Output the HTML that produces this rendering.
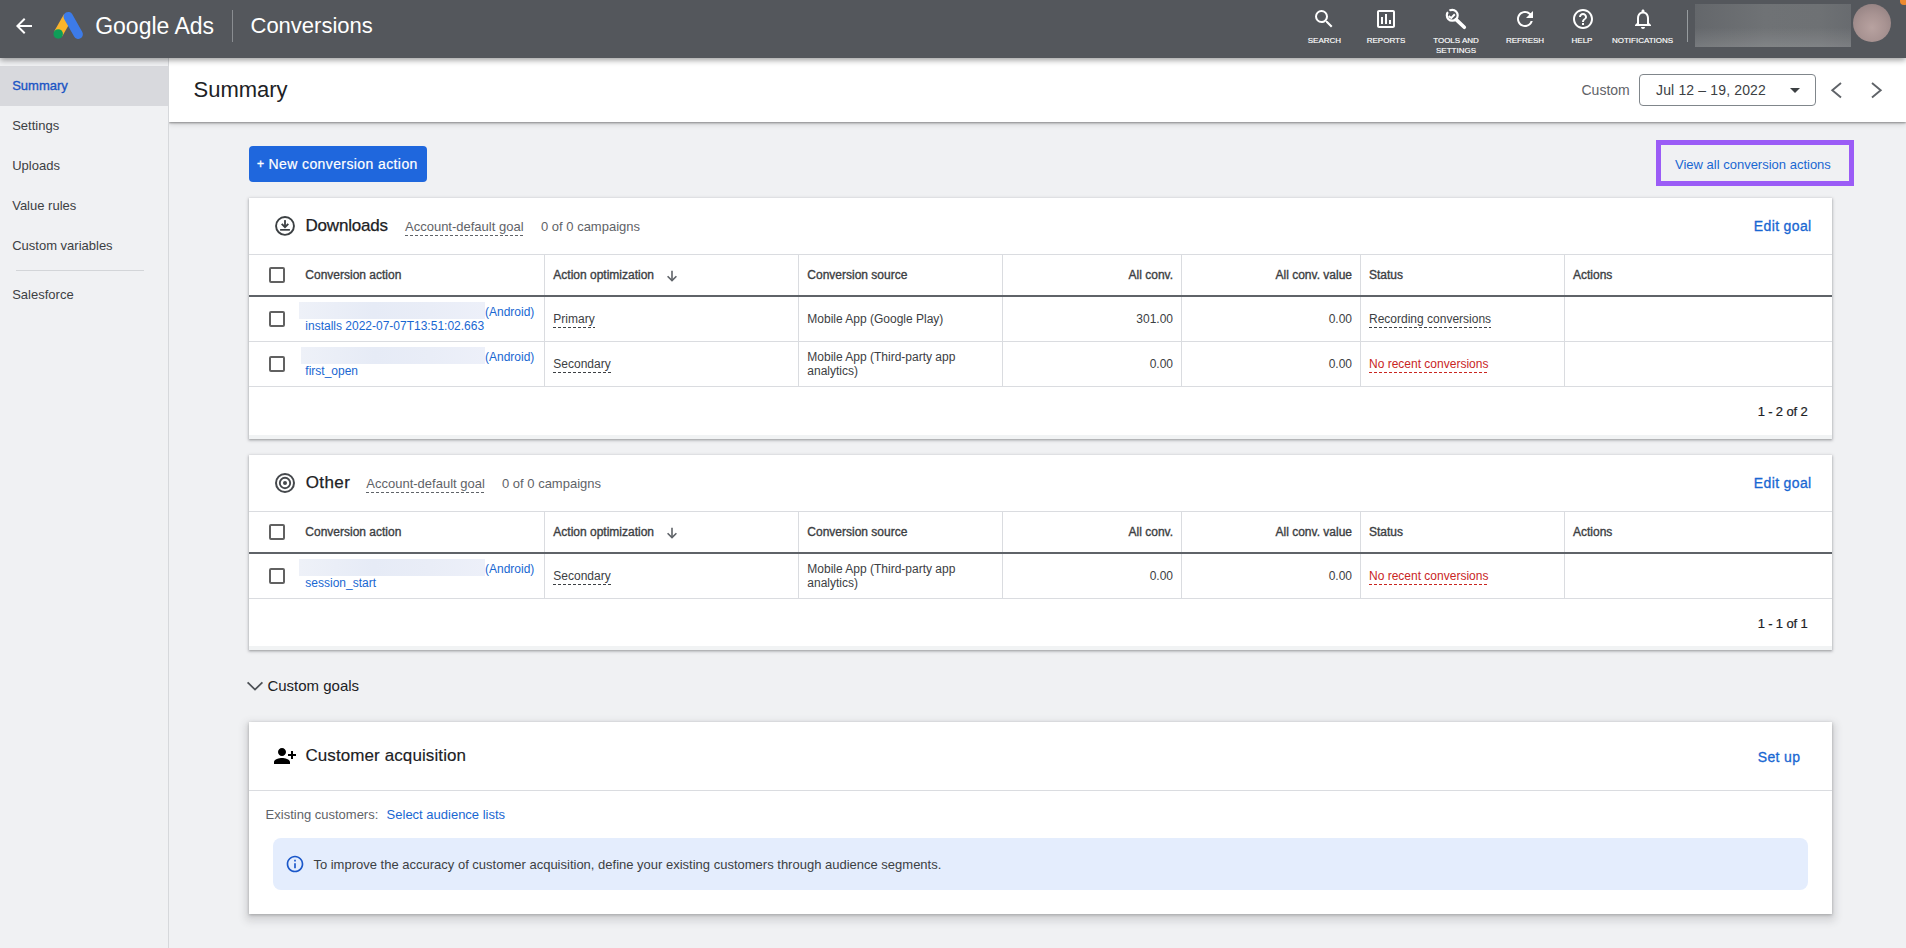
<!DOCTYPE html>
<html><head><meta charset="utf-8"><title>Conversions - Google Ads</title>
<style>
html,body{margin:0;padding:0;}
body{width:1906px;height:948px;overflow:hidden;position:relative;background:#f0f1f3;font-family:"Liberation Sans", sans-serif;}
.t{position:absolute;white-space:nowrap;line-height:1;}
.ul{position:absolute;left:0;right:0;height:1px;}
</style></head><body>
<div style="position:absolute;left:0px;top:0px;width:1906px;height:57.6px;background:#54575c;z-index:5;box-shadow:0 2px 6px rgba(0,0,0,.4);"></div>
<div style="position:absolute;left:0px;top:57px;width:168px;height:891px;background:#f0f1f3;"></div>
<div style="position:absolute;left:168px;top:57px;width:1px;height:891px;background:#d6d8db;"></div>
<div style="position:absolute;left:169px;top:57px;width:1737px;height:65px;background:#fff;box-shadow:0 1px 2px rgba(0,0,0,.38),0 2px 6px rgba(0,0,0,.14);clip-path:inset(0 0 -12px 0);z-index:2;"></div>
<svg style="position:absolute;left:12px;top:14px;z-index:6" width="24" height="24" viewBox="0 0 24 24"><path fill="#fff" d="M20 11H7.83l5.59-5.59L12 4l-8 8 8 8 1.41-1.41L7.83 13H20v-2z"/></svg>
<svg style="position:absolute;left:48px;top:8px;z-index:6" width="40" height="36" viewBox="48 8 40 36"><line x1="68" y1="16.6" x2="58.2" y2="33.9" stroke="#fbb42c" stroke-width="9.4" stroke-linecap="butt"/><line x1="68.2" y1="16.6" x2="78.2" y2="34.2" stroke="#3d7be8" stroke-width="9.4" stroke-linecap="round"/><circle cx="58.2" cy="33.9" r="4.75" fill="#0f9d58"/></svg>
<div class="t" style="top:15.00px;font-size:23px;color:#fff;left:95.2px;z-index:6;">Google Ads</div>
<div style="position:absolute;left:232px;top:10px;width:1px;height:32px;background:#8a8d91;z-index:6;"></div>
<div class="t" style="top:15.00px;font-size:22px;color:#fff;left:250.5px;z-index:6;">Conversions</div>
<svg style="position:absolute;left:1312.00px;top:7.00px;z-index:6" width="24" height="24" viewBox="0 0 24 24"><path fill="#fff" d="M15.5 14h-.79l-.28-.27A6.471 6.471 0 0 0 16 9.5 6.5 6.5 0 1 0 9.5 16c1.61 0 3.09-.59 4.23-1.57l.27.28v.79l5 4.99L20.49 19l-4.99-5zm-6 0C7.01 14 5 11.99 5 9.5S7.01 5 9.5 5 14 7.01 14 9.5 11.99 14 9.5 14z"/></svg>
<svg style="position:absolute;left:1374.00px;top:7.00px;z-index:6" width="24" height="24" viewBox="0 0 24 24"><path fill="#fff" d="M19 3H5c-1.1 0-2 .9-2 2v14c0 1.1.9 2 2 2h14c1.1 0 2-.9 2-2V5c0-1.1-.9-2-2-2zm0 16H5V5h14v14zM7 10h2v7H7zm4-3h2v10h-2zm4 6h2v4h-2z"/></svg>
<svg style="position:absolute;left:1440px;top:5px;z-index:6" width="32" height="27" viewBox="1440 5 32 27"><circle cx="1452.25" cy="15.26" r="5.45" fill="none" stroke="#fff" stroke-width="2.2"/><polyline points="1448.6,16.2 1451.3,18 1454.8,14.3" fill="none" stroke="#fff" stroke-width="2"/><line x1="1446.8" y1="9.4" x2="1451.2" y2="13.8" stroke="#54575c" stroke-width="2.1"/><line x1="1456.2" y1="19.6" x2="1464.3" y2="27.3" stroke="#fff" stroke-width="3.6" stroke-linecap="round"/></svg>
<svg style="position:absolute;left:1513.00px;top:7.00px;z-index:6" width="24" height="24" viewBox="0 0 24 24"><path fill="#fff" d="M17.65 6.35A7.958 7.958 0 0 0 12 4c-4.42 0-7.99 3.58-7.99 8s3.57 8 7.99 8c3.73 0 6.84-2.55 7.73-6h-2.08A5.99 5.99 0 0 1 12 18c-3.31 0-6-2.69-6-6s2.69-6 6-6c1.66 0 3.14.69 4.22 1.78L13 11h7V4l-2.35 2.35z"/></svg>
<svg style="position:absolute;left:1570.80px;top:7.00px;z-index:6" width="24" height="24" viewBox="0 0 24 24"><path fill="#fff" d="M11 18h2v-2h-2v2zm1-16C6.48 2 2 6.48 2 12s4.48 10 10 10 10-4.48 10-10S17.52 2 12 2zm0 18c-4.41 0-8-3.59-8-8s3.59-8 8-8 8 3.59 8 8-3.59 8-8 8zm0-14c-2.21 0-4 1.79-4 4h2c0-1.1.9-2 2-2s2 .9 2 2c0 2-3 1.75-3 5h2c0-2.25 3-2.5 3-5 0-2.21-1.79-4-4-4z"/></svg>
<svg style="position:absolute;left:1630.50px;top:7.00px;z-index:6" width="24" height="24" viewBox="0 0 24 24"><path fill="#fff" d="M12 22c1.1 0 2-.9 2-2h-4c0 1.1.9 2 2 2zm6-6v-5c0-3.07-1.63-5.64-4.5-6.32V4c0-.83-.67-1.5-1.5-1.5s-1.5.67-1.5 1.5v.68C7.64 5.36 6 7.92 6 11v5l-2 2v1h16v-1l-2-2zm-2 1H8v-6c0-2.48 1.51-4.5 4-4.5s4 2.02 4 4.5v6z"/></svg>
<div class="t" style="left:1264.4px;width:120px;text-align:center;top:37px;font-size:8px;color:#fff;letter-spacing:0px;-webkit-text-stroke:0.15px #fff;z-index:6">SEARCH</div>
<div class="t" style="left:1326px;width:120px;text-align:center;top:37px;font-size:8px;color:#fff;letter-spacing:0px;-webkit-text-stroke:0.15px #fff;z-index:6">REPORTS</div>
<div class="t" style="left:1396px;width:120px;text-align:center;top:37px;font-size:8px;color:#fff;letter-spacing:0px;-webkit-text-stroke:0.15px #fff;z-index:6">TOOLS AND</div>
<div class="t" style="left:1396px;width:120px;text-align:center;top:47px;font-size:8px;color:#fff;letter-spacing:0px;-webkit-text-stroke:0.15px #fff;z-index:6">SETTINGS</div>
<div class="t" style="left:1465px;width:120px;text-align:center;top:37px;font-size:8px;color:#fff;letter-spacing:0px;-webkit-text-stroke:0.15px #fff;z-index:6">REFRESH</div>
<div class="t" style="left:1522px;width:120px;text-align:center;top:37px;font-size:8px;color:#fff;letter-spacing:0px;-webkit-text-stroke:0.15px #fff;z-index:6">HELP</div>
<div class="t" style="left:1582.5px;width:120px;text-align:center;top:37px;font-size:8px;color:#fff;letter-spacing:0px;-webkit-text-stroke:0.15px #fff;z-index:6">NOTIFICATIONS</div>
<div style="position:absolute;left:1687px;top:10px;width:1px;height:32px;background:#979c9f;z-index:6;"></div>
<div style="position:absolute;left:1695px;top:4px;width:156px;height:43px;background:linear-gradient(180deg,rgba(255,255,255,0) 55%,rgba(255,255,255,.13) 100%),linear-gradient(90deg,#64676b 0%,#6f7275 45%,#6e7174 80%,#686b6f 100%);z-index:6;"></div>
<div style="position:absolute;left:1853px;top:4px;width:38px;height:38px;border-radius:50%;background:radial-gradient(circle at 50% 62%,#b8a2a0 0%,#a89392 45%,#8c7b7c 100%);z-index:6"></div>
<div style="position:absolute;left:1900px;top:-3px;width:8px;height:8px;border-radius:50%;background:#ee8a2f;z-index:6"></div>
<div style="position:absolute;left:0px;top:66px;width:168px;height:40px;background:#d8d9dd;"></div>
<div class="t" style="top:79.00px;font-size:13px;color:#1b55c4;left:12.2px;-webkit-text-stroke:0.35px currentColor;">Summary</div>
<div class="t" style="top:119.00px;font-size:13px;color:#3c4043;left:12.2px;">Settings</div>
<div class="t" style="top:159.00px;font-size:13px;color:#3c4043;left:12.2px;">Uploads</div>
<div class="t" style="top:199.00px;font-size:13px;color:#3c4043;left:12.2px;">Value rules</div>
<div class="t" style="top:239.00px;font-size:13px;color:#3c4043;left:12.2px;">Custom variables</div>
<div style="position:absolute;left:16px;top:270px;width:128px;height:1px;background:#d3d5d8;"></div>
<div class="t" style="top:288.00px;font-size:13px;color:#3c4043;left:12.2px;">Salesforce</div>
<div class="t" style="top:79.00px;font-size:22px;color:#202124;left:193.5px;z-index:3;">Summary</div>
<div class="t" style="top:83.00px;font-size:14px;color:#5f6368;left:1581.5px;z-index:3;">Custom</div>
<div style="position:absolute;left:1639px;top:74px;width:175px;height:30px;border:1px solid #80868b;border-radius:4px;z-index:3;"></div>
<div class="t" style="top:83.00px;font-size:14px;color:#3c4043;letter-spacing:0.15px;left:1656px;z-index:3;">Jul 12 – 19, 2022</div>
<svg style="position:absolute;left:1783px;top:78px;z-index:3" width="24" height="24" viewBox="0 0 24 24"><path fill="#3c4043" d="M7 10l5 5 5-5z"/></svg>
<svg style="position:absolute;left:1826px;top:78px;z-index:3" width="20" height="24" viewBox="1826 78 20 24"><polyline points="1841,83 1832.3,90.2 1841,97.4" fill="none" stroke="#5f6368" stroke-width="1.9"/></svg>
<svg style="position:absolute;left:1866px;top:78px;z-index:3" width="20" height="24" viewBox="1866 78 20 24"><polyline points="1872,83 1880.7,90.2 1872,97.4" fill="none" stroke="#5f6368" stroke-width="1.9"/></svg>
<div style="position:absolute;left:249px;top:146px;width:178px;height:36px;background:#1f67dd;border-radius:4px;"></div>
<div class="t" style="top:158.00px;font-size:12px;color:#fff;left:257px;-webkit-text-stroke:0.35px currentColor;">+</div>
<div class="t" style="top:157.00px;font-size:14px;color:#fff;letter-spacing:0.4px;left:268.5px;-webkit-text-stroke:0.2px currentColor;">New conversion action</div>
<div style="position:absolute;left:1656px;top:140px;width:188px;height:36px;border:5px solid #9b5cf6;"></div>
<div class="t" style="top:158.20px;font-size:13px;color:#1967d2;left:1675px;">View all conversion actions</div>
<div style="position:absolute;left:249px;top:198px;width:1583px;height:241px;background:#fff;box-shadow:0 1px 2px rgba(60,64,67,.35),0 1px 3px 1px rgba(60,64,67,.16);"></div>
<div style="position:absolute;left:249px;top:435px;width:1583px;height:4px;background:#f1f3f4;"></div>
<svg style="position:absolute;left:270px;top:210px" width="30" height="30" viewBox="0 0 30 30"><circle cx="15" cy="15.9" r="8.95" fill="none" stroke="#3c4043" stroke-width="1.9"/><rect x="14.1" y="10.1" width="1.8" height="6.3" fill="#3c4043"/><polyline points="11.7,13.8 15,17.1 18.3,13.8" fill="none" stroke="#3c4043" stroke-width="1.9"/><rect x="10.1" y="19" width="9.8" height="1.7" fill="#3c4043"/></svg>
<div class="t" style="top:217.00px;font-size:17px;color:#202124;letter-spacing:-0.2px;left:305.5px;-webkit-text-stroke:0.25px currentColor;">Downloads</div>
<div class="t" style="top:220.00px;font-size:13px;color:#5f6368;left:405px;">Account-default goal<i class="ul" style="top:15px;background:repeating-linear-gradient(90deg,#5f6368 0 3px,transparent 3px 5px)"></i></div>
<div class="t" style="top:219.90px;font-size:13px;color:#5f6368;left:541px;">0 of 0 campaigns</div>
<div class="t" style="top:218.70px;font-size:14px;color:#1967d2;letter-spacing:0.35px;right:94.5px;-webkit-text-stroke:0.3px currentColor;">Edit goal</div>
<div style="position:absolute;left:249px;top:254px;width:1583px;height:1px;background:#dadce0;"></div>
<div style="position:absolute;left:249px;top:295px;width:1583px;height:2px;background:#5f6368;"></div>
<div style="position:absolute;left:544px;top:255px;width:1px;height:40px;background:#dadce0;"></div>
<div style="position:absolute;left:798px;top:255px;width:1px;height:40px;background:#dadce0;"></div>
<div style="position:absolute;left:1002px;top:255px;width:1px;height:40px;background:#dadce0;"></div>
<div style="position:absolute;left:1181px;top:255px;width:1px;height:40px;background:#dadce0;"></div>
<div style="position:absolute;left:1360px;top:255px;width:1px;height:40px;background:#dadce0;"></div>
<div style="position:absolute;left:1564px;top:255px;width:1px;height:40px;background:#dadce0;"></div>
<div style="position:absolute;left:269px;top:267px;width:12px;height:12px;border:2px solid #616161;border-radius:2px"></div>
<div class="t" style="top:268.70px;font-size:12px;color:#3c4043;left:305.3px;-webkit-text-stroke:0.35px currentColor;">Conversion action</div>
<div class="t" style="top:268.70px;font-size:12px;color:#3c4043;left:553.3px;-webkit-text-stroke:0.35px currentColor;">Action optimization</div>
<svg style="position:absolute;left:660px;top:266px" width="24" height="20" viewBox="660 266 24 20"><line x1="672" y1="270.8" x2="672" y2="280.5" stroke="#5f6368" stroke-width="1.6"/><polyline points="667.6,276.2 672,280.6 676.4,276.2" fill="none" stroke="#5f6368" stroke-width="1.6"/></svg>
<div class="t" style="top:268.70px;font-size:12px;color:#3c4043;left:807.3px;-webkit-text-stroke:0.35px currentColor;">Conversion source</div>
<div class="t" style="top:268.70px;font-size:12px;color:#3c4043;right:733px;-webkit-text-stroke:0.35px currentColor;">All conv.</div>
<div class="t" style="top:268.70px;font-size:12px;color:#3c4043;right:554px;-webkit-text-stroke:0.35px currentColor;">All conv. value</div>
<div class="t" style="top:268.70px;font-size:12px;color:#3c4043;left:1369px;-webkit-text-stroke:0.35px currentColor;">Status</div>
<div class="t" style="top:268.70px;font-size:12px;color:#3c4043;left:1573px;-webkit-text-stroke:0.35px currentColor;">Actions</div>
<div style="position:absolute;left:249px;top:341px;width:1583px;height:1px;background:#dadce0;"></div>
<div style="position:absolute;left:544px;top:297px;width:1px;height:44px;background:#dadce0;"></div>
<div style="position:absolute;left:798px;top:297px;width:1px;height:44px;background:#dadce0;"></div>
<div style="position:absolute;left:1002px;top:297px;width:1px;height:44px;background:#dadce0;"></div>
<div style="position:absolute;left:1181px;top:297px;width:1px;height:44px;background:#dadce0;"></div>
<div style="position:absolute;left:1360px;top:297px;width:1px;height:44px;background:#dadce0;"></div>
<div style="position:absolute;left:1564px;top:297px;width:1px;height:44px;background:#dadce0;"></div>
<div style="position:absolute;left:269px;top:311px;width:12px;height:12px;border:2px solid #616161;border-radius:2px"></div>
<div style="position:absolute;left:299px;top:302px;width:186px;height:17px;background:linear-gradient(90deg,#eef1f8,#e6ebf6 40%,#e9edf7 70%,#edf0f9);"></div>
<div class="t" style="top:306.00px;font-size:12px;color:#1967d2;left:485px;">(Android)</div>
<div class="t" style="top:319.60px;font-size:12px;color:#1967d2;left:305.3px;">installs 2022-07-07T13:51:02.663</div>
<div class="t" style="top:313.00px;font-size:12px;color:#3c4043;left:553.3px;">Primary<i class="ul" style="top:14px;background:repeating-linear-gradient(90deg,#3c4043 0 3px,transparent 3px 5px)"></i></div>
<div class="t" style="top:313.00px;font-size:12px;color:#3c4043;left:807.3px;">Mobile App (Google Play)</div>
<div class="t" style="top:313.00px;font-size:12px;color:#3c4043;right:733px;">301.00</div>
<div class="t" style="top:313.00px;font-size:12px;color:#3c4043;right:554px;">0.00</div>
<div class="t" style="top:313.00px;font-size:12px;color:#3c4043;left:1369px;">Recording conversions<i class="ul" style="top:14px;background:repeating-linear-gradient(90deg,#3c4043 0 3px,transparent 3px 5px)"></i></div>
<div style="position:absolute;left:249px;top:386px;width:1583px;height:1px;background:#dadce0;"></div>
<div style="position:absolute;left:544px;top:342px;width:1px;height:44px;background:#dadce0;"></div>
<div style="position:absolute;left:798px;top:342px;width:1px;height:44px;background:#dadce0;"></div>
<div style="position:absolute;left:1002px;top:342px;width:1px;height:44px;background:#dadce0;"></div>
<div style="position:absolute;left:1181px;top:342px;width:1px;height:44px;background:#dadce0;"></div>
<div style="position:absolute;left:1360px;top:342px;width:1px;height:44px;background:#dadce0;"></div>
<div style="position:absolute;left:1564px;top:342px;width:1px;height:44px;background:#dadce0;"></div>
<div style="position:absolute;left:269px;top:356px;width:12px;height:12px;border:2px solid #616161;border-radius:2px"></div>
<div style="position:absolute;left:301px;top:347px;width:184px;height:17px;background:linear-gradient(90deg,#eef1f8,#e6ebf6 40%,#e9edf7 70%,#edf0f9);"></div>
<div class="t" style="top:351.00px;font-size:12px;color:#1967d2;left:485px;">(Android)</div>
<div class="t" style="top:364.60px;font-size:12px;color:#1967d2;left:305.3px;">first_open</div>
<div class="t" style="top:358.00px;font-size:12px;color:#3c4043;left:553.3px;">Secondary<i class="ul" style="top:14px;background:repeating-linear-gradient(90deg,#3c4043 0 3px,transparent 3px 5px)"></i></div>
<div class="t" style="top:351.00px;font-size:12px;color:#3c4043;left:807.3px;">Mobile App (Third-party app</div>
<div class="t" style="top:365.00px;font-size:12px;color:#3c4043;left:807.3px;">analytics)</div>
<div class="t" style="top:358.00px;font-size:12px;color:#3c4043;right:733px;">0.00</div>
<div class="t" style="top:358.00px;font-size:12px;color:#3c4043;right:554px;">0.00</div>
<div class="t" style="top:358.00px;font-size:12px;color:#c9251f;left:1369px;">No recent conversions<i class="ul" style="top:14px;background:repeating-linear-gradient(90deg,#c9251f 0 3px,transparent 3px 5px)"></i></div>
<div class="t" style="top:405.00px;font-size:13px;color:#202124;letter-spacing:-0.15px;right:98.5px;-webkit-text-stroke:0.2px currentColor;">1 - 2 of 2</div>
<div style="position:absolute;left:249px;top:455px;width:1583px;height:195px;background:#fff;box-shadow:0 1px 2px rgba(60,64,67,.35),0 1px 3px 1px rgba(60,64,67,.16);"></div>
<div style="position:absolute;left:249px;top:646px;width:1583px;height:4px;background:#f1f3f4;"></div>
<svg style="position:absolute;left:273px;top:471px" width="24" height="24" viewBox="0 0 24 24"><circle cx="12" cy="12" r="9" fill="none" stroke="#45484c" stroke-width="2"/><circle cx="12" cy="12" r="5.2" fill="none" stroke="#45484c" stroke-width="1.9"/><circle cx="12" cy="12" r="2" fill="#45484c"/></svg>
<div class="t" style="top:474.00px;font-size:17px;color:#202124;letter-spacing:0.4px;left:305.7px;-webkit-text-stroke:0.25px currentColor;">Other</div>
<div class="t" style="top:477.00px;font-size:13px;color:#5f6368;left:366.3px;">Account-default goal<i class="ul" style="top:15px;background:repeating-linear-gradient(90deg,#5f6368 0 3px,transparent 3px 5px)"></i></div>
<div class="t" style="top:476.90px;font-size:13px;color:#5f6368;left:502px;">0 of 0 campaigns</div>
<div class="t" style="top:475.70px;font-size:14px;color:#1967d2;letter-spacing:0.35px;right:94.5px;-webkit-text-stroke:0.3px currentColor;">Edit goal</div>
<div style="position:absolute;left:249px;top:511px;width:1583px;height:1px;background:#dadce0;"></div>
<div style="position:absolute;left:249px;top:552px;width:1583px;height:2px;background:#5f6368;"></div>
<div style="position:absolute;left:544px;top:512px;width:1px;height:40px;background:#dadce0;"></div>
<div style="position:absolute;left:798px;top:512px;width:1px;height:40px;background:#dadce0;"></div>
<div style="position:absolute;left:1002px;top:512px;width:1px;height:40px;background:#dadce0;"></div>
<div style="position:absolute;left:1181px;top:512px;width:1px;height:40px;background:#dadce0;"></div>
<div style="position:absolute;left:1360px;top:512px;width:1px;height:40px;background:#dadce0;"></div>
<div style="position:absolute;left:1564px;top:512px;width:1px;height:40px;background:#dadce0;"></div>
<div style="position:absolute;left:269px;top:524px;width:12px;height:12px;border:2px solid #616161;border-radius:2px"></div>
<div class="t" style="top:525.70px;font-size:12px;color:#3c4043;left:305.3px;-webkit-text-stroke:0.35px currentColor;">Conversion action</div>
<div class="t" style="top:525.70px;font-size:12px;color:#3c4043;left:553.3px;-webkit-text-stroke:0.35px currentColor;">Action optimization</div>
<svg style="position:absolute;left:660px;top:523px" width="24" height="20" viewBox="660 523 24 20"><line x1="672" y1="527.8" x2="672" y2="537.5" stroke="#5f6368" stroke-width="1.6"/><polyline points="667.6,533.2 672,537.6 676.4,533.2" fill="none" stroke="#5f6368" stroke-width="1.6"/></svg>
<div class="t" style="top:525.70px;font-size:12px;color:#3c4043;left:807.3px;-webkit-text-stroke:0.35px currentColor;">Conversion source</div>
<div class="t" style="top:525.70px;font-size:12px;color:#3c4043;right:733px;-webkit-text-stroke:0.35px currentColor;">All conv.</div>
<div class="t" style="top:525.70px;font-size:12px;color:#3c4043;right:554px;-webkit-text-stroke:0.35px currentColor;">All conv. value</div>
<div class="t" style="top:525.70px;font-size:12px;color:#3c4043;left:1369px;-webkit-text-stroke:0.35px currentColor;">Status</div>
<div class="t" style="top:525.70px;font-size:12px;color:#3c4043;left:1573px;-webkit-text-stroke:0.35px currentColor;">Actions</div>
<div style="position:absolute;left:249px;top:598px;width:1583px;height:1px;background:#dadce0;"></div>
<div style="position:absolute;left:544px;top:554px;width:1px;height:44px;background:#dadce0;"></div>
<div style="position:absolute;left:798px;top:554px;width:1px;height:44px;background:#dadce0;"></div>
<div style="position:absolute;left:1002px;top:554px;width:1px;height:44px;background:#dadce0;"></div>
<div style="position:absolute;left:1181px;top:554px;width:1px;height:44px;background:#dadce0;"></div>
<div style="position:absolute;left:1360px;top:554px;width:1px;height:44px;background:#dadce0;"></div>
<div style="position:absolute;left:1564px;top:554px;width:1px;height:44px;background:#dadce0;"></div>
<div style="position:absolute;left:269px;top:568px;width:12px;height:12px;border:2px solid #616161;border-radius:2px"></div>
<div style="position:absolute;left:299px;top:559px;width:186px;height:17px;background:linear-gradient(90deg,#eef1f8,#e6ebf6 40%,#e9edf7 70%,#edf0f9);"></div>
<div class="t" style="top:563.00px;font-size:12px;color:#1967d2;left:485px;">(Android)</div>
<div class="t" style="top:576.60px;font-size:12px;color:#1967d2;left:305.3px;">session_start</div>
<div class="t" style="top:570.00px;font-size:12px;color:#3c4043;left:553.3px;">Secondary<i class="ul" style="top:14px;background:repeating-linear-gradient(90deg,#3c4043 0 3px,transparent 3px 5px)"></i></div>
<div class="t" style="top:563.00px;font-size:12px;color:#3c4043;left:807.3px;">Mobile App (Third-party app</div>
<div class="t" style="top:577.00px;font-size:12px;color:#3c4043;left:807.3px;">analytics)</div>
<div class="t" style="top:570.00px;font-size:12px;color:#3c4043;right:733px;">0.00</div>
<div class="t" style="top:570.00px;font-size:12px;color:#3c4043;right:554px;">0.00</div>
<div class="t" style="top:570.00px;font-size:12px;color:#c9251f;left:1369px;">No recent conversions<i class="ul" style="top:14px;background:repeating-linear-gradient(90deg,#c9251f 0 3px,transparent 3px 5px)"></i></div>
<div class="t" style="top:617.00px;font-size:13px;color:#202124;letter-spacing:-0.15px;right:98.5px;-webkit-text-stroke:0.2px currentColor;">1 - 1 of 1</div>
<svg style="position:absolute;left:240px;top:672px" width="30" height="28" viewBox="240 672 30 28"><polyline points="247.6,682.4 255,689.6 262.4,682.4" fill="none" stroke="#4d5156" stroke-width="1.8"/></svg>
<div class="t" style="top:677.80px;font-size:15px;color:#202124;left:267.4px;">Custom goals</div>
<div style="position:absolute;left:249px;top:722px;width:1583px;height:192px;background:#fff;box-shadow:0 1px 3px rgba(60,64,67,.35),0 4px 8px 3px rgba(60,64,67,.16);"></div>
<div style="position:absolute;left:249px;top:790px;width:1583px;height:1px;background:#dadce0;"></div>
<svg style="position:absolute;left:273px;top:744px" width="24" height="24" viewBox="0 0 24 24"><path fill="#000" d="M15 12c2.21 0 4-1.79 4-4s-1.79-4-4-4-4 1.79-4 4 1.79 4 4 4zm-9-2V7H4v3H1v2h3v3h2v-3h3v-2H6zm9 4c-2.67 0-8 1.34-8 4v2h16v-2c0-2.66-5.33-4-8-4z" transform="translate(24,0) scale(-1,1)"/></svg>
<div class="t" style="top:747.00px;font-size:17px;color:#202124;letter-spacing:0.1px;left:305.4px;-webkit-text-stroke:0.15px currentColor;">Customer acquisition</div>
<div class="t" style="top:750.00px;font-size:14px;color:#1967d2;letter-spacing:0.35px;right:105.70000000000005px;-webkit-text-stroke:0.3px currentColor;">Set up</div>
<div class="t" style="top:807.80px;font-size:13px;color:#5f6368;left:265.6px;">Existing customers:</div>
<div class="t" style="top:807.80px;font-size:13px;color:#1967d2;left:386.6px;">Select audience lists</div>
<div style="position:absolute;left:273px;top:838px;width:1535px;height:52px;background:#e4edfd;border-radius:8px;"></div>
<svg style="position:absolute;left:285px;top:854px" width="20" height="20" viewBox="0 0 24 24"><path fill="#1a57c9" d="M11 7h2v2h-2zm0 4h2v6h-2zm1-9C6.48 2 2 6.48 2 12s4.48 10 10 10 10-4.48 10-10S17.52 2 12 2zm0 18c-4.41 0-8-3.59-8-8s3.59-8 8-8 8 3.59 8 8-3.59 8-8 8z"/></svg>
<div class="t" style="top:858.00px;font-size:13px;color:#3c4043;left:313.4px;">To improve the accuracy of customer acquisition, define your existing customers through audience segments.</div>
</body></html>
